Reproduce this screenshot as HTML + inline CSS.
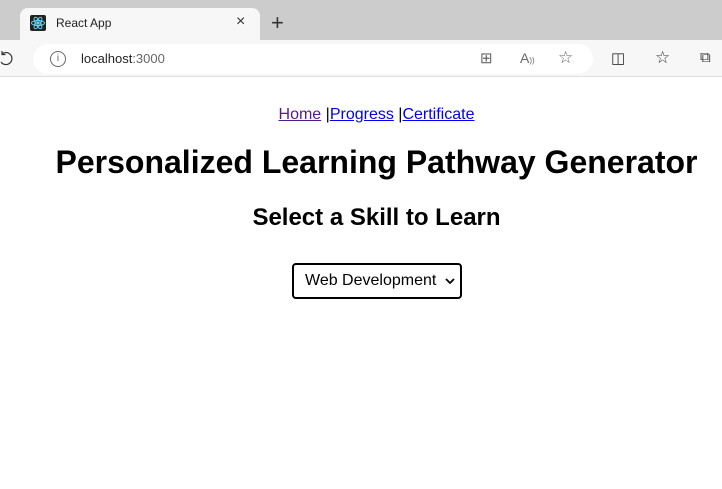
<!DOCTYPE html>
<html><head><style>
*{margin:0;padding:0;box-sizing:border-box}
body{width:722px;height:489px;overflow:hidden;background:#fff;font-family:"Liberation Sans",Arial,sans-serif;position:relative}
.abs{position:absolute}
.c{position:absolute;left:0;width:753px;text-align:center;white-space:nowrap}
a{color:#0000ee}
</style></head><body>
<div class="abs" style="left:0;top:0;width:722px;height:40px;background:#cccccc"></div>
<div class="abs" style="left:20px;top:8px;width:240px;height:34px;background:#f7f7f7;border-radius:8px 8px 0 0"></div>
<div class="abs" style="left:30px;top:15px;width:16px;height:16px;background:#222;border-radius:2px"></div>
<svg class="abs" style="left:30px;top:15px" width="16" height="16" viewBox="0 0 16 16" fill="none" stroke="#61dafb" stroke-width="0.9"><ellipse cx="8" cy="8" rx="6.5" ry="2.5"/><ellipse cx="8" cy="8" rx="6.5" ry="2.5" transform="rotate(60 8 8)"/><ellipse cx="8" cy="8" rx="6.5" ry="2.5" transform="rotate(120 8 8)"/><circle cx="8" cy="8" r="1.2" fill="#61dafb"/></svg>
<div class="abs" style="left:56px;top:16px;font-size:12px;color:#222">React App</div>
<div class="abs" style="left:236px;top:13px;font-size:16px;color:#333">×</div>
<div class="abs" style="left:271px;top:10px;font-size:22px;color:#333;font-weight:300">+</div>
<div class="abs" style="left:0;top:40px;width:722px;height:37px;background:#f7f7f7;border-bottom:1px solid #e0e0e0"></div>
<svg class="abs" style="left:0;top:50px" width="14" height="18" viewBox="0 0 14 18" fill="none" stroke="#333" stroke-width="1.2"><path d="M2 4 A6 6 0 1 1 1 12"/><path d="M2 1 V4.5 H5.5"/></svg>
<div class="abs" style="left:33px;top:44px;width:560px;height:30px;background:#fff;border-radius:15px"></div>
<div class="abs" style="left:50px;top:51px;width:16px;height:16px;border:1px solid #666;border-radius:50%;font-size:10px;text-align:center;line-height:14px;color:#666">i</div>
<div class="abs" style="left:81px;top:51px;font-size:13px;color:#222">localhost<span style="color:#666">:3000</span></div>
<div class="abs" style="left:480px;top:49px;font-size:15px;color:#666">⊞</div>
<div class="abs" style="left:520px;top:50px;font-size:14px;color:#666">A<span style="font-size:8px">))</span></div>
<div class="abs" style="left:558px;top:48px;font-size:17px;color:#666">☆</div>
<div class="abs" style="left:611px;top:49px;font-size:15px;color:#333">◫</div>
<div class="abs" style="left:655px;top:48px;font-size:17px;color:#333">☆</div>
<div class="abs" style="left:700px;top:49px;font-size:15px;color:#333">⧉</div>
<div class="c" style="top:106px;font-size:16px"><a href="#" style="color:#551a8b">Home</a> |<a href="#">Progress</a> |<a href="#">Certificate</a></div>
<div class="c" style="top:144px;font-size:32px;font-weight:bold">Personalized Learning Pathway Generator</div>
<div class="c" style="top:204px;font-size:24px;font-weight:bold">Select a Skill to Learn</div>
<div class="abs" style="left:292px;top:263px;width:170px;height:36px;border:2px solid #000;border-radius:4px;font-size:16px;padding:7px 0 0 11px">Web Development<svg style="position:absolute;right:5px;top:12px" width="10" height="8" viewBox="0 0 10 8"><path d="M1 2 L5 6 L9 2" stroke="#000" stroke-width="1.8" fill="none"/></svg></div>
</body></html>
